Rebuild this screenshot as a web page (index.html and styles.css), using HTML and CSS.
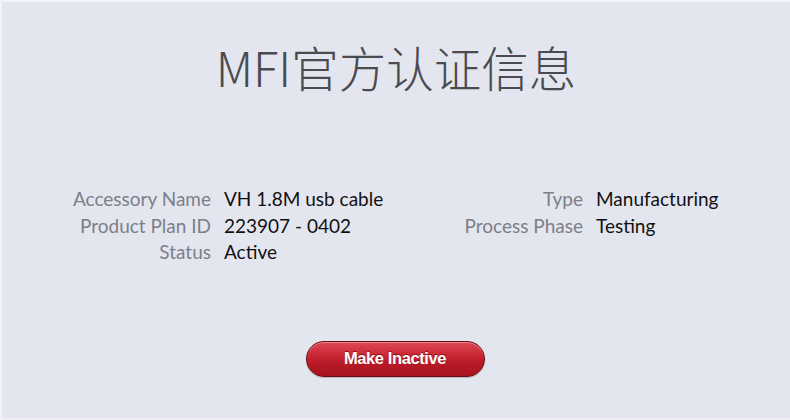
FILE: index.html
```html
<!DOCTYPE html>
<html>
<head>
<meta charset="utf-8">
<link rel="stylesheet" href="styles.css">
</head>
<body>
<div class="page">
  <h1 class="title">MFI官方认证信息</h1>
  <div class="info">
    <div class="label">Accessory Name</div>
    <div class="value">VH 1.8M usb cable</div>
    <div class="label">Type</div>
    <div class="value">Manufacturing</div>
    <div class="label">Product Plan ID</div>
    <div class="value">223907 - 0402</div>
    <div class="label">Process Phase</div>
    <div class="value">Testing</div>
    <div class="label">Status</div>
    <div class="value">Active</div>
  </div>
  <div class="actions">
    <button class="btn">Make Inactive</button>
  </div>
</div>
</body>
</html>
```

FILE: styles.css
```css
html, body {
  margin: 0;
  padding: 0;
  background: #e4e6ef;
}
.page {
  width: 790px;
  height: 420px;
  box-sizing: border-box;
  border-top: 2px solid #f1f2f6;
  border-left: 2px solid #f1f2f6;
  border-bottom: 2px solid #f0eef0;
  display: flex;
  flex-direction: column;
}
.title {
  margin: 32px 0 0 0;
  text-align: center;
  font-family: "Noto Sans CJK SC", sans-serif;
  font-weight: 300;
  font-size: 47.5px;
  line-height: 66px;
  color: #4a4b50;
  letter-spacing: 0;
}
.info {
  margin-top: 86px;
  padding-left: 69px;
  display: grid;
  grid-template-columns: 140px 227px 119px auto;
  column-gap: 13px;
  font-family: Lato, "Open Sans", sans-serif;
  font-size: 19px;
  line-height: 26.5px;
}
.label {
  text-align: right;
  color: #7b7f89;
}
.value {
  color: #111;
}
.actions {
  display: flex;
  justify-content: center;
  margin-top: 75px;
  padding-right: 2px;
}
.btn {
  width: 179px;
  height: 36px;
  border-radius: 18px;
  border: 1px solid #6a0a12;
  background: linear-gradient(#dc4a55 0%, #c92633 40%, #b91b28 60%, #a8121e 100%);
  box-shadow: inset 0 1px 0 rgba(255,255,255,0.35), 0 1px 1px rgba(0,0,0,0.2);
  color: #fff;
  font-family: "Liberation Sans", Arial, sans-serif;
  font-weight: bold;
  font-size: 16.5px;
  letter-spacing: -0.4px;
  text-shadow: 0 -1px 0 rgba(90,0,0,0.6);
  padding: 0;
}
```
